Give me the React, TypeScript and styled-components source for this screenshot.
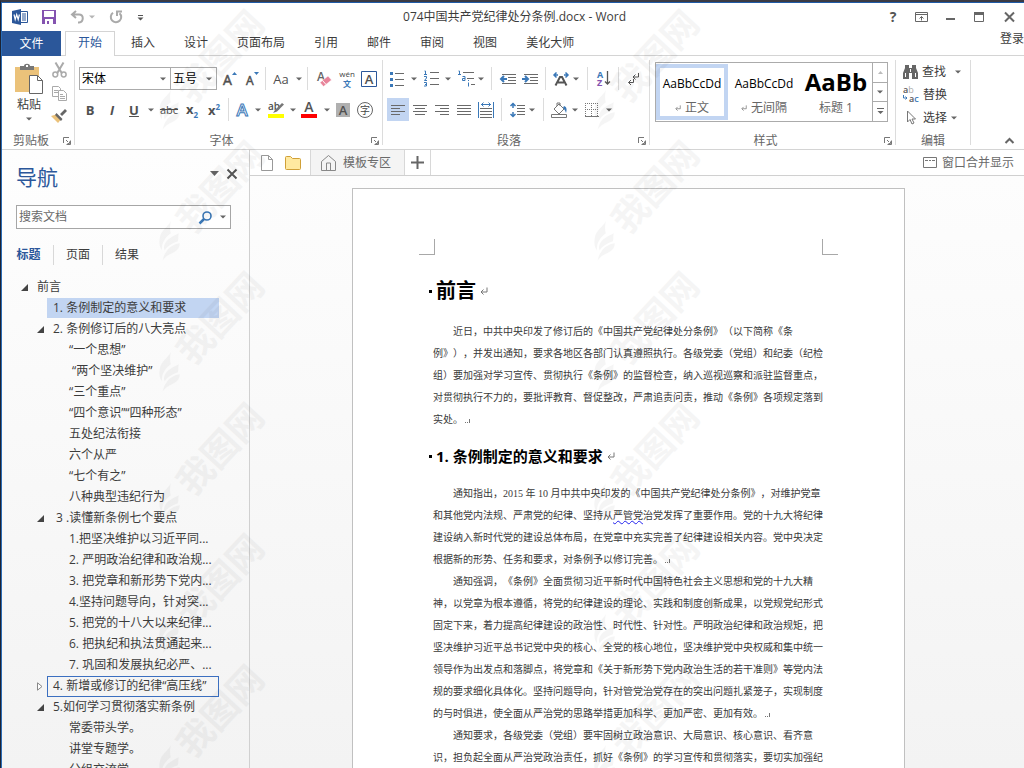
import React from 'react';
import styled, { createGlobalStyle, css } from 'styled-components';

const uiFont = '"Open Sans", "Noto Sans CJK SC", sans-serif';
const blue = '#2b579a';
const iconBlue = '#3a78b8';
const grey = '#6a6a6a';

const GlobalStyle = createGlobalStyle`
  * { box-sizing: border-box; }
  body { margin: 0; background: #fff; }
  button, input, select { font: inherit; color: inherit; }
  button { border: 0; background: none; padding: 0; cursor: pointer; }
  svg { display: block; flex: none; overflow: visible; }
  h1, h2, p, ul { margin: 0; padding: 0; }
`;

const Window = styled.div`
  position: relative;
  display: flex;
  flex-direction: column;
  height: 100vh;
  overflow: hidden;
  border-top: 2px solid #3b3b44;
  border-left: 1px solid #1c2233;
  font: 12px/16px ${uiFont};
  color: #3c3c3c;
  background: #fff;
`;

const Frame = styled.div`
  display: flex;
  flex-direction: column;
  flex: 1;
  min-height: 0;
  border-top: 1px solid #1f5ba8;
  border-left: 1px solid #2b6cb5;
`;

/* ---------- title bar ---------- */

const TitleBar = styled.header`
  display: grid;
  grid-template-columns: 1fr auto 1fr;
  align-items: center;
  height: 28px;
  flex: none;
  padding: 0 7px 0 10px;
`;

const QuickAccess = styled.div`
  display: flex;
  align-items: center;
  gap: 14px;
`;

const UndoPair = styled.div`
  display: flex;
  align-items: center;
  gap: 4px;
`;

const WindowControls = styled.div`
  display: flex;
  align-items: center;
  justify-content: flex-end;
  gap: 15px;
`;

const IconButton = styled.button`
  display: flex;
  align-items: center;
  justify-content: center;
`;

const HelpButton = styled(IconButton)`
  width: 14px;
  font: bold 14px/16px ${uiFont};
  color: #555;
`;

/* ---------- tabs ---------- */

const TabRow = styled.nav`
  display: flex;
  height: 25px;
  flex: none;
  box-shadow: inset 0 -1px #d4d4d4;
`;

const FileTab = styled.button`
  width: 59px;
  margin-right: 4px;
  background: ${blue};
  color: #fff;
`;

const Tab = styled.button<{ $active?: boolean }>`
  padding: 0 14px 1px;
  margin-right: 1px;
  ${p => p.$active && css`
    padding: 0 12px 2px;
    margin-right: 2px;
    border: 1px solid #d4d4d4;
    border-bottom: 0;
    background: #fff;
    color: ${blue};
  `}
`;

const SignIn = styled.a`
  margin-left: auto;
  color: #3c3c3c;
  text-decoration: none;
  white-space: nowrap;
`;

/* ---------- ribbon ---------- */

const Ribbon = styled.div`
  display: flex;
  height: 94px;
  flex: none;
  padding: 4px 0;
  border-bottom: 1px solid #d4d4d4;
`;

const Group = styled.section<{ $width: number }>`
  display: flex;
  flex-direction: column;
  flex: none;
  width: ${p => p.$width}px;
  border-right: 1px solid #dcdcdc;
`;

const GroupBody = styled.div<{ $pad?: number; $top?: number }>`
  flex: 1;
  padding: ${p => p.$top ?? 3}px 0 0 ${p => p.$pad ?? 4}px;
`;

const GroupFooter = styled.div<{ $launcher: boolean }>`
  display: grid;
  grid-template-columns: ${p => (p.$launcher ? '1fr 14px' : '1fr')};
  align-items: center;
  height: 12px;
  color: #666;
  text-align: center;
`;

const ToolRow = styled.div`
  display: flex;
  align-items: center;
  height: 31px;
`;

const Tool = styled.button<{ $w?: number; $on?: boolean }>`
  display: flex;
  align-items: center;
  justify-content: center;
  flex: none;
  width: ${p => p.$w ?? 22}px;
  height: 23px;
  color: #444;
  background: ${p => (p.$on ? '#c2d5f2' : 'none')};
`;

const Divider = styled.span<{ $w: number }>`
  display: flex;
  flex: none;
  justify-content: center;
  width: ${p => p.$w}px;
  height: 23px;
  &::before { content: ''; width: 1px; background: #dcdcdc; }
`;

const Combo = styled.label<{ $w: number }>`
  display: flex;
  align-items: center;
  width: ${p => p.$w}px;
  height: 23px;
  margin-right: -1px;
  padding: 0 4px 0 2px;
  border: 1px solid #ababab;
  color: #000;
  &:last-of-type { margin-right: 0; }
  select {
    flex: 1;
    min-width: 0;
    appearance: none;
    border: 0;
    padding: 0;
    background: none;
    outline: 0;
  }
`;

const Glyph = styled.span<{ $size?: number; $bold?: boolean; $italic?: boolean; $line?: string }>`
  font-size: ${p => p.$size ?? 13}px;
  line-height: 16px;
  font-weight: ${p => (p.$bold ? 700 : 400)};
  font-style: ${p => (p.$italic ? 'italic' : 'normal')};
  text-decoration: ${p => p.$line ?? 'none'};
  color: #505050;
  sup, sub { font-size: 8px; line-height: 8px; color: ${iconBlue}; }
`;

const ClipboardBody = styled.div`
  display: flex;
  flex: 1;
  gap: 6px;
  padding: 2px 0 0 11px;
`;

const PasteButton = styled.button`
  display: flex;
  flex-direction: column;
  align-items: center;
  width: 32px;
  gap: 2px;
  padding-top: 2px;
  span { margin-bottom: 2px; }
`;

const ClipTools = styled.div`
  display: flex;
  flex-direction: column;
  align-items: center;
  gap: 8px;
`;

const Gallery = styled.div`
  display: flex;
  width: 233px;
  height: 60px;
  border: 1px solid #ababab;
`;

const StyleCard = styled.button<{ $on?: boolean }>`
  display: flex;
  flex-direction: column;
  align-items: center;
  justify-content: space-between;
  width: 72px;
  margin: 1px 0;
  padding: 7px 0 0;
  border: 4px solid ${p => (p.$on ? '#c2d5f2' : 'transparent')};
  color: #666;
`;

const Sample = styled.span<{ $big?: boolean }>`
  height: 18px;
  color: #000;
  white-space: nowrap;
  font: ${p => (p.$big ? 'bold 24px/14px' : '12px/18px')} "Open Sans", sans-serif;
`;

const StyleName = styled.span`
  display: flex;
  align-items: center;
  gap: 4px;
`;

const GalleryScroll = styled.div`
  display: flex;
  flex-direction: column;
  width: 15px;
  margin-left: auto;
  border-left: 1px solid #ababab;
  button { flex: 1; display: flex; align-items: center; justify-content: center; }
  button + button { border-top: 1px solid #ababab; }
`;

const EditButton = styled.button<{ $spread?: boolean }>`
  display: flex;
  align-items: center;
  height: 23px;
  gap: 4px;
  span { margin-right: ${p => (p.$spread ? 5 : 0)}px; }
`;

const RibbonEnd = styled.div`
  flex: 1;
  display: flex;
  align-items: flex-end;
  justify-content: flex-end;
  padding: 0 10px 1px 0;
`;

/* ---------- navigation pane ---------- */

const Workspace = styled.div`
  display: flex;
  flex: 1;
  min-height: 0;
`;

const NavPane = styled.aside`
  width: 248px;
  flex: none;
  overflow: hidden;
  border-right: 1px solid #d0d0d0;
  background: linear-gradient(#fefefe, #f3f3f3);
`;

const NavHeader = styled.div`
  display: flex;
  align-items: center;
  gap: 8px;
  height: 55px;
  padding: 0 12px 8px 14px;
  h2 {
    margin: 6px auto 0 0;
    font-size: 21px;
    font-weight: 400;
    line-height: 32px;
    color: ${blue};
  }
`;

const SearchBox = styled.label`
  display: flex;
  align-items: center;
  gap: 8px;
  height: 24px;
  margin: 0 18px 0 14px;
  padding: 0 4px 0 2px;
  border: 1px solid #a6a6a6;
  background: #fff;
  input {
    flex: 1;
    min-width: 0;
    padding: 0;
    border: 0;
    outline: 0;
    background: none;
    &::placeholder { color: #6a6a6a; opacity: 1; }
  }
`;

const NavTabs = styled.div`
  display: flex;
  margin: 16px 0 12px 2px;
`;

const NavTab = styled.button<{ $active?: boolean }>`
  height: 20px;
  width: 49px;
  font-weight: ${p => (p.$active ? 700 : 400)};
  color: ${p => (p.$active ? blue : '#3c3c3c')};
  & + & { border-left: 1px solid #d8d8d8; }
`;

const Tree = styled.ul`
  list-style: none;
`;

const TreeRow = styled.li<{ $level: number }>`
  display: flex;
  align-items: center;
  height: 21px;
  padding-left: ${p => 17 + p.$level * 16}px;
  white-space: pre;
`;

const Twist = styled.span`
  width: 10px;
  flex: none;
  display: flex;
  justify-content: center;
`;

const TreeLink = styled.a<{ $state?: 'selected' | 'focused' }>`
  height: 21px;
  padding: 2px 0 0 8px;
  color: #3c3c3c;
  text-decoration: none;
  ${p => p.$state && css`
    width: 172px;
    margin-left: 2px;
    padding-left: 6px;
  `}
  ${p => p.$state === 'selected' && css`background: #c2d5f2; border-bottom: 1px solid #fcfcfc;`}
  ${p => p.$state === 'focused' && css`padding: 1px 0 0 5px; border: 1px solid #3b6fc0;`}
`;

/* ---------- document area ---------- */

const DocArea = styled.main`
  display: flex;
  flex-direction: column;
  flex: 1;
  min-width: 0;
`;

const DocTabs = styled.div`
  display: flex;
  align-items: center;
  height: 26px;
  flex: none;
  padding: 0 10px 0 10px;
  border-bottom: 1px solid #d0d0d0;
  color: #6a6a6a;
`;

const DocTab = styled.button`
  display: flex;
  align-items: center;
  gap: 7px;
  height: 25px;
  margin-left: 9px;
  padding: 0 13px 0 10px;
  border: solid #d8d8d8;
  border-width: 0 1px;
  background: #f4f4f4;
`;

const AddTab = styled(IconButton)`
  width: 26px;
  height: 25px;
  border-right: 1px solid #d8d8d8;
`;

const MergeButton = styled.button`
  display: flex;
  align-items: center;
  gap: 5px;
  margin-left: auto;
`;

const Canvas = styled.div`
  flex: 1;
  min-height: 0;
  overflow: hidden;
  padding: 12px 17px 0 0;
  background: linear-gradient(#fdfdfd, #f3f3f3);
`;

const Paper = styled.article`
  width: 553px;
  min-height: 100%;
  margin: 0 auto;
  padding: 50px 66px 0;
  border: 1px solid #c0c0c0;
  background: #fff;
  color: #3a3a3a;
`;

const Crop = styled.div`
  display: flex;
  justify-content: space-between;
  span { width: 16px; height: 16px; border: solid #a8a8a8; border-width: 0 0 1px 1px; }
  span:first-child { border-width: 0 1px 1px 0; }
`;

const Content = styled.div`
  padding-left: 16px;
  white-space: nowrap;
`;

const Heading = styled.h1`
  display: flex;
  align-items: center;
  gap: 4px;
  margin: 16px 0 10px -6px;
  font-size: 20px;
  line-height: 40px;
  color: #000;
  &::before { content: ''; width: 3px; height: 3px; background: #000; }
`;

const SubHeading = styled.h2`
  display: flex;
  align-items: center;
  gap: 4px;
  margin: 10px 0 12px -6px;
  font-size: 15px;
  line-height: 30px;
  color: #000;
  &::before { content: ''; width: 3px; height: 3px; background: #000; }
`;

const Para = styled.p`
  font: 10px/22px "Liberation Serif", "Noto Sans CJK SC", serif;
  text-indent: 20px;
  text-spacing-trim: space-all;
  margin-left: -2px;
  svg { display: inline-block; margin-left: 2px; }
`;

const Wavy = styled.span`
  text-decoration: underline wavy #2222ee 1px;
  text-underline-offset: 1px;
`;

/* ---------- watermark ---------- */

const MarkLayer = styled.div`
  position: absolute;
  inset: 0;
  overflow: hidden;
  pointer-events: none;
  opacity: 0.035;
`;

const Mark = styled.div<{ $x: number; $y: number }>`
  position: absolute;
  left: ${p => p.$x}px;
  top: ${p => p.$y}px;
  display: flex;
  align-items: center;
  gap: 4px;
  width: 150px;
  height: 40px;
  font-size: 36px;
  line-height: 40px;
  font-weight: 700;
  color: #000;
  white-space: nowrap;
  transform: rotate(-47deg);
`;

/* ---------- icons ---------- */

const Caret = ({ color = '#666', wide = false }: { color?: string; wide?: boolean }) => (
  <svg width={wide ? 9 : 6} height={wide ? 5 : 4} viewBox={wide ? '0 0 9 5' : '0 0 6 4'}>
    <path d={wide ? 'M0 0h9L4.500 5z' : 'M0 0.500h6L3 3.500z'} fill={color} />
  </svg>
);

const CaretTool = ({ w, label }: { w: number; label: string }) => (
  <Tool $w={w} aria-label={label}><Caret /></Tool>
);

const Return = ({ size = 8 }: { size?: number }) => (
  <svg width={size} height={size} viewBox="0 0 8 8" fill="none" stroke="#777">
    <path d="M7 0.500v4.500H1.500M3.500 2.500L1 5l2.500 2.500" />
  </svg>
);

const LineMark = () => (
  <svg width="6" height="5" viewBox="0 0 6 5" fill="#777"><path d="M0 4h1v1H0zM2 4h1v1H2zM4 1h1v4H4z" /></svg>
);

const Launcher = () => (
  <IconButton aria-label="更多选项">
    <svg width="8" height="8" viewBox="0 0 8 8" fill="none" stroke="#777">
      <path d="M0.500 6V0.500H6M3 3l2 2" /><path d="M7.500 3.500v4h-4M4.500 6.500h2v-2" />
    </svg>
  </IconButton>
);

const WordLogo = () => (
  <svg width="16" height="16" viewBox="0 0 16 16">
    <path d="M8 2.500h7.500v11H8" fill="#fff" stroke={blue} />
    <path d="M10 5h4M10 7h4M10 9h4M10 11h4" stroke={blue} />
    <path d="M0 2l9-2v16l-9-2z" fill={blue} />
    <path d="M2 5.500l1.200 5 1.500-5 1.500 5 1.200-5" fill="none" stroke="#fff" strokeWidth="1.200" />
  </svg>
);

const SaveIcon = () => (
  <svg width="14" height="14" viewBox="0 0 14 14">
    <path d="M0 0h14v14H0z" fill="#8453b0" />
    <path d="M2 1h10v6H2zM3 9h8v5H3z" fill="#fff" />
    <path d="M5 11h2v3H5z" fill="#8453b0" />
  </svg>
);

const UndoIcon = () => (
  <svg width="15" height="14" viewBox="0 0 15 14" fill="none" stroke="#aaa" strokeWidth="2">
    <path d="M6 1L2 4.500 6 8M2 4.500h7c5 0 5 7.500 0 8H8" />
  </svg>
);

const RedoIcon = () => (
  <svg width="14" height="14" viewBox="0 0 14 14" fill="none" stroke="#aaa" strokeWidth="2">
    <path d="M4 2.800A5.200 5.200 0 1 0 10.500 3.200M8 6V1.500h5" />
  </svg>
);

const PasteIcon = () => (
  <svg width="28" height="31" viewBox="0 0 28 31">
    <path d="M0 3h24v25H0z" fill="#ebc27a" />
    <path d="M5 6V2h4c0-3 6-3 6 0h4v4z" fill="#777" />
    <path d="M11 1h2v2h-2z" fill="#fff" />
    <path d="M14.500 11.500h8l5 5v13h-13z" fill="#fff" stroke="#666" />
    <path d="M22.500 11.500v5h5" fill="none" stroke="#666" />
  </svg>
);

const CutIcon = () => (
  <svg width="15" height="16" viewBox="0 0 15 16" fill="none" stroke="#aaa" strokeWidth="1.500">
    <path d="M3.500 0.500l6.500 11M11.500 0.500L5 11.500" strokeWidth="2" />
    <circle cx="3.300" cy="12.500" r="2.400" /><circle cx="11.700" cy="12.500" r="2.400" />
  </svg>
);

const CopyIcon = () => (
  <svg width="15" height="15" viewBox="0 0 15 15" fill="#fff" stroke="#aaa">
    <path d="M0.500 0.500h6l2 2v8h-8zM2 4.500h4M2 6.500h4" />
    <path d="M6.500 4.500h5l3 3v7h-8zM8 8.500h3M8 10.500h5M8 12.500h5" />
  </svg>
);

const PainterIcon = () => (
  <svg width="16" height="15" viewBox="0 0 16 15">
    <path d="M0 7l5-1.500 5 5L7 14z" fill="#ebc27a" />
    <path d="M5.500 4l6 6-1.500 2-6-6zM9 5l5-5 2 2-5 5z" fill="#666" />
  </svg>
);

const GrowFont = ({ up }: { up?: boolean }) => (
  <svg width="14" height="16" viewBox="0 0 14 16">
    <text x="0" y="14" fontSize={up ? 14 : 12} fill="#505050" stroke="#505050" strokeWidth="0.500">A</text>
    <path d={up ? 'M9 4h5l-2.500-3z' : 'M8 1h5l-2.500 3z'} fill={iconBlue} />
  </svg>
);

const EraserIcon = () => (
  <svg width="16" height="16" viewBox="0 0 16 16">
    <text x="1" y="10" fontSize="12" fontWeight="600" fill="#666">A</text>
    <path d="M4 11.500l8-6.500 3.500 4-8 6.500z" fill="#e8849a" stroke="#fff" strokeWidth="0.500" />
    <path d="M6.500 9.500l3.500 4" stroke="#fff" />
  </svg>
);

const PinyinIcon = () => (
  <svg width="18" height="20" viewBox="0 0 18 20">
    <text x="9" y="8" fontSize="8" textAnchor="middle" fill="#444">wén</text>
    <text x="9" y="18" fontSize="8" fontWeight="700" textAnchor="middle" fill={iconBlue}>文</text>
  </svg>
);

const BoxedA = () => (
  <svg width="16" height="16" viewBox="0 0 16 16">
    <path d="M0.500 0.500h15v15H0.500z" fill="none" stroke={blue} />
    <text x="8" y="13" fontSize="13" fontWeight="600" textAnchor="middle" fill="#505050">A</text>
  </svg>
);

const EffectA = () => (
  <svg width="16" height="18" viewBox="0 0 16 18">
    <text x="8" y="15" fontSize="17" fontWeight="600" textAnchor="middle" fill="#fff" stroke={iconBlue}>A</text>
  </svg>
);

const HighlightIcon = () => (
  <svg width="16" height="17" viewBox="0 0 16 17">
    <text x="0" y="9" fontSize="10" fontWeight="600" fill="#505050">ab</text>
    <path d="M14 2l2 1.500-7 7-4 1.500 2-3z" fill="#777" />
    <path d="M0 13h16v4H0z" fill="#ff0" />
  </svg>
);

const FontColorIcon = () => (
  <svg width="16" height="17" viewBox="0 0 16 17">
    <text x="8" y="11" fontSize="14" fontWeight="600" textAnchor="middle" fill="#555">A</text>
    <path d="M0 13h16v4H0z" fill="#f00" />
  </svg>
);

const ShadedA = () => (
  <svg width="14" height="14" viewBox="0 0 14 14">
    <path d="M0 0h14v14H0z" fill="#b0b0b0" />
    <text x="7" y="12" fontSize="13" fontWeight="600" textAnchor="middle" fill="#505050">A</text>
  </svg>
);

const CircledChar = () => (
  <svg width="16" height="16" viewBox="0 0 16 16">
    <circle cx="8" cy="8" r="7.500" fill="none" stroke="#666" />
    <text x="8" y="11.500" fontSize="10" textAnchor="middle" fill="#444">字</text>
  </svg>
);

const BulletsIcon = () => (
  <svg width="14" height="16" viewBox="0 0 14 16">
    <path d="M5 2.500h9M5 8.500h9M5 14.500h9" stroke={grey} />
    <path d="M0 1h3v3H0zM0 7h3v3H0zM0 13h3v3H0z" fill={iconBlue} />
  </svg>
);

const NumbersIcon = () => (
  <svg width="15" height="17" viewBox="0 0 15 17">
    <path d="M6 2.500h9M6 8.500h9M6 14.500h9" stroke={grey} />
    <path d="M0.500 1h1v3.500M0 4.500h3M0 6.500h2.500v1.500L0.500 10.500h2.500M0 12.500h2.500v3.500H0M1 14.500h1.500" fill="none" stroke={iconBlue} />
  </svg>
);

const MultiIcon = () => (
  <svg width="17" height="17" viewBox="0 0 17 17">
    <path d="M5 2.500h11M9 8.500h7M13 14.500h4" stroke={grey} />
    <path d="M0.500 1h1v3.500M0 4.500h3M4.500 6.500h2.500v4H4.500v-2h2.500M10.500 10v1M10.500 12.500v4" fill="none" stroke={iconBlue} />
  </svg>
);

const IndentIcon = ({ out }: { out?: boolean }) => (
  <svg width="16" height="12" viewBox="0 0 16 12">
    <path d="M2 1.500h14M8 4.500h8M8 7.500h8M2 10.500h14" stroke={grey} />
    <path d={out ? 'M7 6H1M4 3L1 6l3 3' : 'M0 6h6M3 3l3 3-3 3'} fill="none" stroke={iconBlue} strokeWidth="2" />
  </svg>
);

const ScaleIcon = () => (
  <svg width="16" height="14" viewBox="0 0 16 14">
    <path d="M2.500 13.500L7 5h2l4.500 8.500M5 10.500h6" fill="none" stroke="#555" strokeWidth="2" />
    <path d="M5 3H1M3.500 0.500L1 3l2.500 2.500M11 3h4M12.500 0.500L15 3l-2.500 2.500" fill="none" stroke={iconBlue} strokeWidth="1.500" />
  </svg>
);

const SortIcon = () => (
  <svg width="14" height="17" viewBox="0 0 14 17">
    <text x="0" y="8" fontSize="9" fontWeight="700" fill={iconBlue}>A</text>
    <text x="0" y="16" fontSize="9" fontWeight="700" fill="#8453b0">Z</text>
    <path d="M10.500 1v13M8 11.500l2.500 2.500 2.500-2.500" fill="none" stroke="#555" strokeWidth="1.300" />
  </svg>
);

const MarksIcon = () => (
  <svg width="12" height="14" viewBox="0 0 12 14" fill="none" stroke="#555">
    <path d="M10.500 1v4H5M7.500 2.500L5 5l2.500 2.500M5.500 7v3.500H0.500M3 8l-2.500 2.500L3 13" />
  </svg>
);

const AlignIcon = ({ kind }: { kind: 'left' | 'center' | 'right' | 'full' }) => {
  const d = {
    left: 'M0 1.500h14M0 4.500h9M0 7.500h14M0 10.500h9',
    center: 'M0 1.500h14M2 4.500h10M0 7.500h14M2 10.500h10',
    right: 'M0 1.500h14M5 4.500h9M0 7.500h14M5 10.500h9',
    full: 'M0 1.500h14M0 4.500h14M0 7.500h14M0 10.500h14',
  }[kind];
  return <svg width="14" height="12" viewBox="0 0 14 12"><path d={d} stroke={grey} /></svg>;
};

const DistributeIcon = () => (
  <svg width="16" height="16" viewBox="0 0 16 16" fill="none">
    <path d="M0.500 0v16M15.500 0v16M3 2.500h10M5.500 0.500l-2 2 2 2M10.500 0.500l2 2-2 2" stroke={iconBlue} />
    <path d="M2 6.500h12M2 9.500h12M2 12.500h12M2 15.500h12" stroke={grey} />
  </svg>
);

const SpacingIcon = () => (
  <svg width="15" height="16" viewBox="0 0 15 16" fill="none">
    <path d="M3 1v5M3 10v5M0.500 4L3 1.500 5.500 4M0.500 12L3 14.500 5.500 12" stroke={iconBlue} strokeWidth="1.500" />
    <path d="M7 3.500h8M7 6.500h8M7 9.500h8M7 12.500h8" stroke={grey} />
  </svg>
);

const BucketIcon = () => (
  <svg width="17" height="16" viewBox="0 0 17 16" fill="none" stroke="#777">
    <path d="M3 7l5-5 5 5-5 5zM6 4V1h3v3" />
    <path d="M13 4c3 1 3 4 2 7-1-3-2-4-3-5z" fill={iconBlue} stroke="none" />
    <path d="M0.500 12.500h15v3h-15z" />
  </svg>
);

const BordersIcon = () => (
  <svg width="14" height="14" viewBox="0 0 14 14" fill="none" stroke="#777">
    <path d="M0 0.500h14M0 6.500h14M0.500 0v13M6.500 0v13M12.500 0v13" strokeDasharray="1 1" />
    <path d="M0 13.500h14" />
  </svg>
);

const FindIcon = () => (
  <svg width="15" height="14" viewBox="0 0 15 14" fill="#666">
    <path d="M2 3V0h4v3h3V0h4v3l2 5v6H9V8H6v6H0V8z" />
    <path d="M2.500 8v4M12.500 8v4M7.500 4v3" stroke="#fff" />
  </svg>
);

const ReplaceIcon = () => (
  <svg width="16" height="17" viewBox="0 0 16 17">
    <text x="0" y="7" fontSize="9" fontWeight="600" fill="#555">a<tspan fill="#aaa" fontWeight="400">b</tspan></text>
    <text x="6" y="16" fontSize="9" fontWeight="600" fill="#555">a<tspan fill={iconBlue}>c</tspan></text>
    <path d="M0.500 9v3h3M2.500 10.500L4 12l-1.500 1.500" fill="none" stroke={iconBlue} />
  </svg>
);

const PointerIcon = () => (
  <svg width="16" height="15" viewBox="0 0 16 15" fill="none" stroke="#777">
    <path d="M4.500 1v11l2.500-2.500 2 4.500 2-1-2-4h3.500z" />
  </svg>
);

const LensIcon = () => (
  <svg width="13" height="13" viewBox="0 0 13 13" fill="none" stroke={iconBlue} strokeWidth="1.600">
    <circle cx="8" cy="5" r="4" /><path d="M5 8l-4.500 4.500" strokeWidth="2.500" />
  </svg>
);

const CrossIcon = ({ size }: { size: number }) => (
  <svg width={size} height={size} viewBox="0 0 10 10" stroke="#555" strokeWidth="2"><path d="M0.500 0.500l9 9M9.500 0.500l-9 9" /></svg>
);

const OpenTwist = () => <svg width="7" height="7" viewBox="0 0 7 7"><path d="M7 0v7H0z" fill="#444" /></svg>;
const ClosedTwist = () => (
  <svg width="6" height="9" viewBox="0 0 6 9" fill="#fff" stroke="#888"><path d="M0.500 0.800L5 4.500 0.500 8.200z" /></svg>
);

const LeafIcon = () => (
  <svg width="32" height="32" viewBox="0 0 32 32">
    <g transform="rotate(47 16 16)">
      <path d="M17-4c-3 6-10 9-11 17-1 5 0 9 2 12 0-9 4-13 9-17-1-3-1-8 0-12z" />
      <path d="M25 8c-6 3-12 6-14 11-1 2-1 4 0 6 3-5 8-7 13-9 1-3 0-5 1-8z" />
      <path d="M26 18c-6 1-11 4-13 8-2 2-3 5-4 9 4-5 7-6 11-8s6-5 6-9z" />
    </g>
  </svg>
);

/* ---------- data ---------- */

const tabs = ['插入', '设计', '页面布局', '引用', '邮件', '审阅', '视图', '美化大师'];

type Node = { text: string; level: number; twist?: 'open' | 'closed'; state?: 'selected' | 'focused' };

const outline: Node[] = [
  { text: '前言', level: 0, twist: 'open' },
  { text: '1. 条例制定的意义和要求', level: 1, state: 'selected' },
  { text: '2. 条例修订后的八大亮点', level: 1, twist: 'open' },
  { text: '“一个思想”', level: 2 },
  { text: ' “两个坚决维护”', level: 2 },
  { text: '“三个重点”', level: 2 },
  { text: '“四个意识”“四种形态”', level: 2 },
  { text: '五处纪法衔接', level: 2 },
  { text: '六个从严', level: 2 },
  { text: '“七个有之”', level: 2 },
  { text: '八种典型违纪行为', level: 2 },
  { text: ' 3 .读懂新条例七个要点', level: 1, twist: 'open' },
  { text: '1.把坚决维护以习近平同...', level: 2 },
  { text: '2. 严明政治纪律和政治规...', level: 2 },
  { text: '3. 把党章和新形势下党内...', level: 2 },
  { text: '4.坚持问题导向，针对突...', level: 2 },
  { text: '5. 把党的十八大以来纪律...', level: 2 },
  { text: '6. 把执纪和执法贯通起来...', level: 2 },
  { text: '7. 巩固和发展执纪必严、...', level: 2 },
  { text: '4. 新增或修订的纪律“高压线”', level: 1, twist: 'closed', state: 'focused' },
  { text: '5.如何学习贯彻落实新条例', level: 1, twist: 'open' },
  { text: '常委带头学。', level: 2 },
  { text: '讲堂专题学。', level: 2 },
  { text: '分组交流学。', level: 2 },
];

const markRows = [0, 1, 2, 3, 4, 5];
const markColumns = [134, 569];

/* ---------- sections ---------- */

const GroupLabel = ({ children, launcher = true }: { children: string; launcher?: boolean }) => (
  <GroupFooter $launcher={launcher}><span>{children}</span>{launcher && <Launcher />}</GroupFooter>
);

const FontGroup = () => (
  <Group $width={308}>
    <GroupBody>
      <ToolRow>
        <Combo $w={92}><select defaultValue="宋体" aria-label="字体"><option>宋体</option></select><Caret /></Combo>
        <Combo $w={47}><select defaultValue="五号" aria-label="字号"><option>五号</option></select><Caret /></Combo>
        <Tool $w={26} aria-label="增大字号"><GrowFont up /></Tool>
        <Tool $w={20} aria-label="减小字号"><GrowFont /></Tool>
        <Divider $w={5} />
        <Tool $w={26}><Glyph>Aa</Glyph></Tool>
        <CaretTool w={9} label="更改大小写" />
        <Divider $w={9} />
        <Tool $w={24} aria-label="清除格式"><EraserIcon /></Tool>
        <Tool aria-label="拼音指南"><PinyinIcon /></Tool>
        <Tool aria-label="字符边框"><BoxedA /></Tool>
      </ToolRow>
      <ToolRow>
        <Tool><Glyph $bold>B</Glyph></Tool>
        <Tool><Glyph $bold $italic>I</Glyph></Tool>
        <Tool><Glyph $bold $line="underline">U</Glyph></Tool>
        <CaretTool w={12} label="下划线样式" />
        <Tool $w={24}><Glyph $size={11} $line="line-through">abc</Glyph></Tool>
        <Tool><Glyph $bold>x<sub>2</sub></Glyph></Tool>
        <Tool><Glyph $bold>x<sup>2</sup></Glyph></Tool>
        <Divider $w={6} />
        <Tool $w={22} aria-label="文本效果"><EffectA /></Tool>
        <CaretTool w={10} label="文本效果选项" />
        <Tool $w={26} aria-label="突出显示"><HighlightIcon /></Tool>
        <CaretTool w={7} label="突出显示颜色" />
        <Tool $w={26} aria-label="字体颜色"><FontColorIcon /></Tool>
        <CaretTool w={10} label="字体颜色选项" />
        <Tool aria-label="字符底纹"><ShadedA /></Tool>
        <Tool aria-label="带圈字符"><CircledChar /></Tool>
      </ToolRow>
    </GroupBody>
    <GroupLabel>字体</GroupLabel>
  </Group>
);

const ParagraphGroup = () => (
  <Group $width={267}>
    <GroupBody>
      <ToolRow>
        <Tool $w={20} aria-label="项目符号"><BulletsIcon /></Tool>
        <CaretTool w={14} label="项目符号选项" />
        <Tool $w={20} aria-label="编号"><NumbersIcon /></Tool>
        <CaretTool w={14} label="编号选项" />
        <Tool aria-label="多级列表"><MultiIcon /></Tool>
        <CaretTool w={8} label="多级列表选项" />
        <Divider $w={12} />
        <Tool aria-label="减少缩进量"><IndentIcon out /></Tool>
        <Tool aria-label="增加缩进量"><IndentIcon /></Tool>
        <Divider $w={9} />
        <Tool aria-label="中文版式"><ScaleIcon /></Tool>
        <CaretTool w={8} label="中文版式选项" />
        <Divider $w={14} />
        <Tool $w={20} aria-label="排序"><SortIcon /></Tool>
        <Divider $w={8} />
        <Tool $w={24} aria-label="显示编辑标记"><MarksIcon /></Tool>
      </ToolRow>
      <ToolRow>
        <Tool $on aria-label="左对齐"><AlignIcon kind="left" /></Tool>
        <Tool aria-label="居中"><AlignIcon kind="center" /></Tool>
        <Tool aria-label="右对齐"><AlignIcon kind="right" /></Tool>
        <Tool aria-label="两端对齐"><AlignIcon kind="full" /></Tool>
        <Tool aria-label="分散对齐"><DistributeIcon /></Tool>
        <Divider $w={9} />
        <Tool aria-label="行距"><SpacingIcon /></Tool>
        <CaretTool w={8} label="行距选项" />
        <Divider $w={14} />
        <Tool $w={18} aria-label="底纹"><BucketIcon /></Tool>
        <CaretTool w={14} label="底纹选项" />
        <Tool $w={20} aria-label="边框"><BordersIcon /></Tool>
        <CaretTool w={14} label="边框选项" />
      </ToolRow>
    </GroupBody>
    <GroupLabel>段落</GroupLabel>
  </Group>
);

const App = () => (
  <Window>
    <GlobalStyle />
    <Frame>
      <TitleBar>
        <QuickAccess>
          <WordLogo />
          <IconButton aria-label="保存"><SaveIcon /></IconButton>
          <UndoPair>
            <IconButton aria-label="撤消"><UndoIcon /></IconButton>
            <Caret color="#b5b5b5" />
          </UndoPair>
          <IconButton aria-label="重复"><RedoIcon /></IconButton>
          <IconButton aria-label="自定义快速访问工具栏">
            <svg width="7" height="7" viewBox="0 0 7 7"><path d="M1 1h5v1H1zM0.500 3.500h6L3.500 6.500z" fill="#555" /></svg>
          </IconButton>
        </QuickAccess>
        <span>074中国共产党纪律处分条例.docx - Word</span>
        <WindowControls>
          <HelpButton aria-label="帮助">?</HelpButton>
          <IconButton aria-label="功能区显示选项">
            <svg width="13" height="10" viewBox="0 0 13 10" fill="none" stroke="#666">
              <path d="M0.500 0.500h12v9H0.500zM0.500 2.500h12M6.500 8.500V4.500M4.500 6.500l2-2 2 2" />
            </svg>
          </IconButton>
          <IconButton aria-label="最小化">
            <svg width="14" height="10" viewBox="0 0 14 10"><path d="M3 6h9v2H3z" fill="#666" /></svg>
          </IconButton>
          <IconButton aria-label="最大化">
            <svg width="14" height="10" viewBox="0 0 14 10"><path d="M2.500 0.500h9v9h-9z" fill="none" stroke="#666" /><path d="M2 0h10v3H2z" fill="#666" /></svg>
          </IconButton>
          <IconButton aria-label="关闭">
            <svg width="16" height="10" viewBox="0 0 16 10" stroke="#666" strokeWidth="2"><path d="M4 0.500l9 9M13 0.500l-9 9" /></svg>
          </IconButton>
        </WindowControls>
      </TitleBar>

      <TabRow>
        <FileTab>文件</FileTab>
        <Tab $active>开始</Tab>
        {tabs.map(t => <Tab key={t}>{t}</Tab>)}
        <SignIn href="#">登录</SignIn>
      </TabRow>

      <Ribbon>
        <Group $width={73}>
          <ClipboardBody>
            <PasteButton><PasteIcon /><span>粘贴</span><Caret /></PasteButton>
            <ClipTools>
              <IconButton aria-label="剪切"><CutIcon /></IconButton>
              <IconButton aria-label="复制"><CopyIcon /></IconButton>
              <IconButton aria-label="格式刷"><PainterIcon /></IconButton>
            </ClipTools>
          </ClipboardBody>
          <GroupLabel>剪贴板</GroupLabel>
        </Group>
        <FontGroup />
        <ParagraphGroup />
        <Group $width={246}>
          <GroupBody $pad={5} $top={2}>
            <Gallery>
              <StyleCard $on><Sample>AaBbCcDd</Sample><StyleName><Return size={6} />正文</StyleName></StyleCard>
              <StyleCard><Sample>AaBbCcDd</Sample><StyleName><Return size={6} />无间隔</StyleName></StyleCard>
              <StyleCard><Sample $big>AaBb</Sample><StyleName>标题 1</StyleName></StyleCard>
              <GalleryScroll>
                <button aria-label="上一行"><svg width="5" height="3" viewBox="0 0 5 3"><path d="M0 3h5L2.500 0z" fill="#bbb" /></svg></button>
                <button aria-label="下一行"><Caret /></button>
                <button aria-label="其他样式"><svg width="7" height="7" viewBox="0 0 7 7"><path d="M0 0h7v1H0zM0.500 3h6l-3 3z" fill="#666" /></svg></button>
              </GalleryScroll>
            </Gallery>
          </GroupBody>
          <GroupLabel>样式</GroupLabel>
        </Group>
        <Group $width={75}>
          <GroupBody $pad={7} $top={0}>
            <EditButton $spread><FindIcon /><span>查找</span><Caret /></EditButton>
            <EditButton><ReplaceIcon /><span>替换</span></EditButton>
            <EditButton><PointerIcon /><span>选择</span><Caret /></EditButton>
          </GroupBody>
          <GroupLabel launcher={false}>编辑</GroupLabel>
        </Group>
        <RibbonEnd>
          <IconButton aria-label="折叠功能区">
            <svg width="9" height="6" viewBox="0 0 9 6" fill="none" stroke="#666" strokeWidth="2"><path d="M0.500 5l4-4 4 4" /></svg>
          </IconButton>
        </RibbonEnd>
      </Ribbon>

      <Workspace>
        <NavPane>
          <NavHeader>
            <h2>导航</h2>
            <IconButton aria-label="任务窗格选项"><Caret wide /></IconButton>
            <IconButton aria-label="关闭导航"><CrossIcon size={10} /></IconButton>
          </NavHeader>
          <SearchBox>
            <input placeholder="搜索文档" aria-label="搜索文档" />
            <LensIcon />
            <Caret />
          </SearchBox>
          <NavTabs>
            <NavTab $active>标题</NavTab>
            <NavTab>页面</NavTab>
            <NavTab>结果</NavTab>
          </NavTabs>
          <Tree>
            {outline.map(n => (
              <TreeRow key={n.text} $level={n.level}>
                <Twist>
                  {n.twist === 'open' && <OpenTwist />}
                  {n.twist === 'closed' && <ClosedTwist />}
                </Twist>
                <TreeLink href="#" $state={n.state}>{n.text}</TreeLink>
              </TreeRow>
            ))}
          </Tree>
        </NavPane>

        <DocArea>
          <DocTabs>
            <IconButton aria-label="新建">
              <svg width="14" height="16" viewBox="0 0 14 16" fill="#fff" stroke="#999"><path d="M1.500 0.500h7l4 4v11h-11zM8.500 0.500v4h4" /></svg>
            </IconButton>
            <IconButton aria-label="打开">
              <svg width="27" height="14" viewBox="0 0 27 14" fill="#ffe9a0" stroke="#d0a038"><path d="M11.500 1.500q0-1 1-1h4l2 2h7q1 0 1 1v9q0 1-1 1h-13q-1 0-1-1z" /></svg>
            </IconButton>
            <DocTab>
              <svg width="15" height="16" viewBox="0 0 15 16" fill="none" stroke="#888"><path d="M0.500 6.500l7-6 7 6v9h-14zM5.500 15v-7h4v7" /></svg>
              模板专区
            </DocTab>
            <AddTab aria-label="新建标签">
              <svg width="13" height="13" viewBox="0 0 13 13" fill="#666"><path d="M0 5.500h13v2H0zM5.500 0h2v13h-2z" /></svg>
            </AddTab>
            <MergeButton>
              <svg width="14" height="11" viewBox="0 0 14 11" fill="none" stroke="#777"><path d="M0.500 0.500h13v10H0.500zM2 3.500h3M6 3.500h2M9 3.500h3" /></svg>
              窗口合并显示
            </MergeButton>
          </DocTabs>
          <Canvas>
            <Paper>
              <Crop><span /><span /></Crop>
              <Content>
                <Heading>前言<Return /></Heading>
                <Para>
                  近日，中共中央印发了修订后的《中国共产党纪律处分条例》（以下简称《条<br />
                  例》），并发出通知，要求各地区各部门认真遵照执行。各级党委（党组）和纪委（纪检<br />
                  组）要加强对学习宣传、贯彻执行《条例》的监督检查，纳入巡视巡察和派驻监督重点，<br />
                  对贯彻执行不力的，要批评教育、督促整改，严肃追责问责，推动《条例》各项规定落到<br />
                  实处。<LineMark />
                </Para>
                <SubHeading>1. 条例制定的意义和要求<Return /></SubHeading>
                <Para>
                  通知指出，2015 年 10 月中共中央印发的《中国共产党纪律处分条例》，对维护党章<br />
                  和其他党内法规、严肃党的纪律、坚持从<Wavy>严管党</Wavy>治党发挥了重要作用。党的十九大将纪律<br />
                  建设纳入新时代党的建设总体布局，在党章中充实完善了纪律建设相关内容。党中央决定<br />
                  根据新的形势、任务和要求，对条例予以修订完善。<LineMark />
                </Para>
                <Para>
                  通知强调，《条例》全面贯彻习近平新时代中国特色社会主义思想和党的十九大精<br />
                  神，以党章为根本遵循，将党的纪律建设的理论、实践和制度创新成果，以党规党纪形式<br />
                  固定下来，着力提高纪律建设的政治性、时代性、针对性。严明政治纪律和政治规矩，把<br />
                  坚决维护习近平总书记党中央的核心、全党的核心地位，坚决维护党中央权威和集中统一<br />
                  领导作为出发点和落脚点，将党章和《关于新形势下党内政治生活的若干准则》等党内法<br />
                  规的要求细化具体化。坚持问题导向，针对管党治党存在的突出问题扎紧笼子，实现制度<br />
                  的与时俱进，使全面从严治党的思路举措更加科学、更加严密、更加有效。<LineMark />
                </Para>
                <Para>
                  通知要求，各级党委（党组）要牢固树立政治意识、大局意识、核心意识、看齐意<br />
                  识，担负起全面从严治党政治责任，抓好《条例》的学习宣传和贯彻落实，要切实加强纪
                </Para>
              </Content>
            </Paper>
          </Canvas>
        </DocArea>
      </Workspace>
    </Frame>

    <MarkLayer aria-hidden="true">
      {markColumns.map(x => markRows.map(r => (
        <Mark key={`${x}-${r}`} $x={x} $y={45 + r * 131}><LeafIcon />我图网</Mark>
      )))}
    </MarkLayer>
  </Window>
);

export default App;
